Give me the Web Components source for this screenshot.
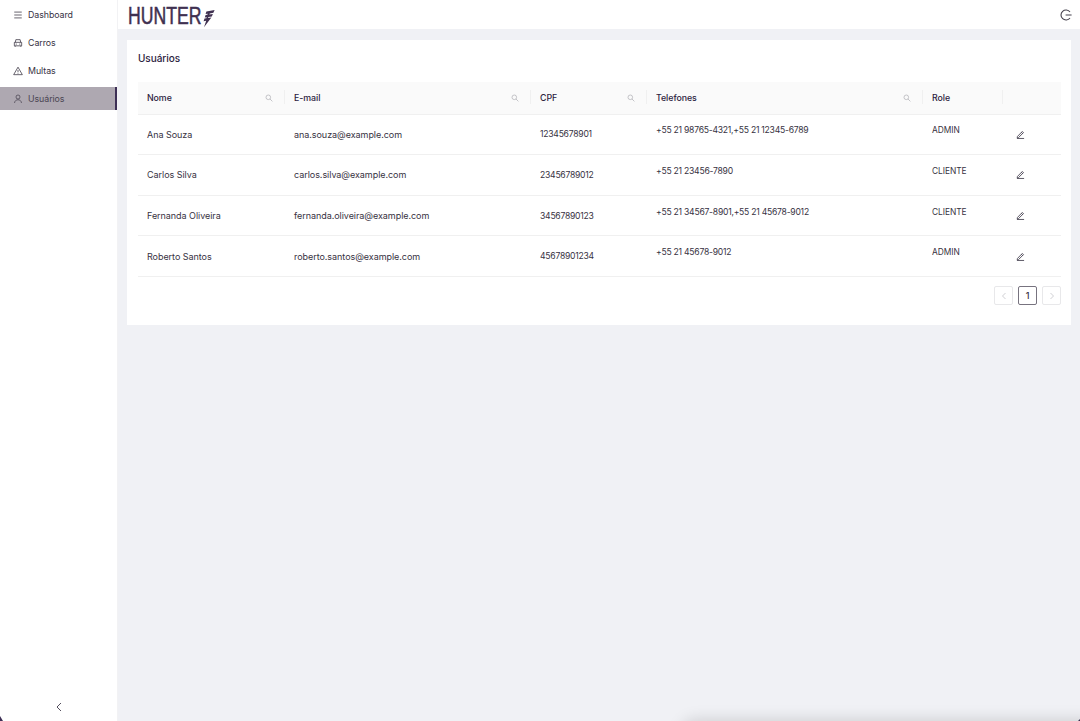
<!DOCTYPE html>
<html lang="pt-BR">
<head>
<meta charset="utf-8">
<title>Usuários</title>
<style>
  html, body { margin: 0; height: 100%; }
  body {
    font-family: "Inter", "Liberation Sans", sans-serif;
    font-size: 9px;
    letter-spacing: -.05px;
    color: #37323f;
    background: #f0f1f5;
    overflow: hidden;
  }
</style>
</head>
<body>
<app-shell>
  <side-nav slot="nav">
    <nav-item icon="menu">Dashboard</nav-item>
    <nav-item icon="car">Carros</nav-item>
    <nav-item icon="warning">Multas</nav-item>
    <nav-item icon="user" active>Usuários</nav-item>
  </side-nav>
  <top-bar slot="top"></top-bar>
  <content-card heading="Usuários">
    <users-table></users-table>
    <table-pager></table-pager>
  </content-card>
</app-shell>

<script>
const ICONS = {
  menu: '<path d="M1.5 2.5h9M1.5 6h9M1.5 9.5h9"/>',
  car: '<path d="M2.8 5.2 3.4 2h5.2l.6 3.2M1.6 5.2h8.8v4.2H1.6zM2.6 9.4v1.2M9.4 9.4v1.2M3.2 7.3h1.4M7.4 7.3h1.4"/>',
  warning: '<path d="M6 1.4 11.2 10.4H.8zM6 4.8v2.8M6 8.4v.7"/>',
  user: '<circle cx="6" cy="3.6" r="2.4"/><path d="M1.8 10.8c.3-2.6 2.1-3.9 4.2-3.9s3.9 1.3 4.2 3.9"/>'
};

class AppShell extends HTMLElement {
  constructor() {
    super();
    this.attachShadow({ mode: 'open' });
    this.shadowRoot.innerHTML = `
      <style>
        :host { display: flex; height: 721px; width: 1080px; position: relative; overflow: hidden; }
        .main { flex: 1; min-width: 0; display: flex; flex-direction: column; gap: 11px; }
        .page { padding: 0 9px; }
        /* shadow of something lying just below the window */
        .under {
          position: absolute; left: 685px; right: -40px; top: 723px; height: 30px;
          border-radius: 10px; box-shadow: 0 0 16px 3px rgba(0, 0, 0, .15);
        }
        .corner { position: absolute; bottom: 0; background: #3d2f55; }
        .corner.left { left: 0; width: 3px; height: 5px; clip-path: polygon(0 0, 100% 100%, 0 100%); }
        .corner.right { right: 0; width: 2px; height: 2px; clip-path: polygon(100% 0, 100% 100%, 0 100%); }
      </style>
      <slot name="nav"></slot>
      <div class="main">
        <slot name="top"></slot>
        <div class="page"><slot></slot></div>
      </div>
      <div class="under"></div>
      <div class="corner left"></div>
      <div class="corner right"></div>
    `;
  }
}

class SideNav extends HTMLElement {
  constructor() {
    super();
    this.attachShadow({ mode: 'open' });
    this.shadowRoot.innerHTML = `
      <style>
        :host {
          display: flex; flex-direction: column; flex: none; box-sizing: border-box;
          width: 118px; height: 721px; background: #fff; border-right: 1px solid #f2f2f4;
        }
        .items { flex: 1; display: flex; flex-direction: column; gap: 5px; padding-top: 3px; }
        .collapse { height: 28px; display: flex; align-items: center; justify-content: center; color: #55505f; }
        svg { width: 8px; height: 10px; fill: none; stroke: currentColor; stroke-width: 1; }
      </style>
      <div class="items"><slot></slot></div>
      <div class="collapse"><svg viewBox="0 0 8 10"><path d="M6 1 2 5l4 4"/></svg></div>
    `;
  }
}

class NavItem extends HTMLElement {
  constructor() {
    super();
    this.attachShadow({ mode: 'open' });
    this.shadowRoot.innerHTML = `
      <style>
        :host {
          display: flex; align-items: center; gap: 5px; box-sizing: border-box;
          height: 23px; padding-left: 13px; color: #37323f; font-size: 8.8px;
        }
        :host([active]) { background: #aea8b1; border-right: 2px solid #3d2f55; color: #4a4552; }
        svg { width: 10px; height: 10px; fill: none; stroke: currentColor; stroke-width: .9; flex: none; }
      </style>
      <svg viewBox="0 0 12 12">${ICONS[this.getAttribute('icon')] || ''}</svg>
      <slot></slot>
    `;
  }
}

class TopBar extends HTMLElement {
  constructor() {
    super();
    this.attachShadow({ mode: 'open' });
    this.shadowRoot.innerHTML = `
      <style>
        :host {
          display: flex; align-items: center; justify-content: space-between; flex: none;
          height: 29px; background: #fff; padding: 0 8px 0 10px;
        }
        .logo { display: flex; align-items: flex-start; height: 29px; color: #3f3050; }
        .word {
          display: block; width: 74px; font: 400 24.5px/31px "Liberation Sans", sans-serif; letter-spacing: 0;
          -webkit-text-stroke: .55px currentColor;
          transform: scaleX(.72); transform-origin: 0 50%; white-space: nowrap;
        }
        .bolt { width: 14px; height: 20px; margin: 8px 0 0 -1px; fill: currentColor; flex: none; overflow: visible; }
        .out { width: 12px; height: 12px; fill: none; stroke: #45414d; stroke-width: 1.1; }
      </style>
      <div class="logo">
        <span class="word">HUNTER</span>
        <svg class="bolt" viewBox="0 0 14 20"><path d="M5.4 3.4 13.6 2 12.4 4.8 8.8 5.4 8.3 6.5 11.9 6 10.8 8.6 7.4 9.1 7 10 10.4 9.5 3 19.2 5.2 12.8 2.6 13.2 3.5 10.6 5.4 10.3 5.8 9.3 3.8 9.6 4.6 7 6.4 6.7 6.8 5.7 4.6 6z"/></svg>
      </div>
      <svg class="out" viewBox="0 0 12 12"><path d="M10 3A5 5 0 1 0 10 9M5.6 6h6"/></svg>
    `;
  }
}

class ContentCard extends HTMLElement {
  constructor() {
    super();
    this.attachShadow({ mode: 'open' });
    this.shadowRoot.innerHTML = `
      <style>
        :host { display: block; background: #fff; padding: 11px 10px 20px 11px; height: 285px; box-sizing: border-box; }
        h2 { margin: 0 0 17px; font-size: 10px; line-height: 14px; font-weight: 500; color: #2c2240; }
      </style>
      <h2>${this.getAttribute('heading')}</h2>
      <slot></slot>
    `;
  }
}

const USERS = [
  ['Ana Souza', 'ana.souza@example.com', '12345678901', '+55 21 98765-4321,+55 21 12345-6789', 'ADMIN'],
  ['Carlos Silva', 'carlos.silva@example.com', '23456789012', '+55 21 23456-7890', 'CLIENTE'],
  ['Fernanda Oliveira', 'fernanda.oliveira@example.com', '34567890123', '+55 21 34567-8901,+55 21 45678-9012', 'CLIENTE'],
  ['Roberto Santos', 'roberto.santos@example.com', '45678901234', '+55 21 45678-9012', 'ADMIN']
];

class UsersTable extends HTMLElement {
  constructor() {
    super();
    this.attachShadow({ mode: 'open' });
    const search = '<svg class="search" viewBox="0 0 8 8"><circle cx="3.3" cy="3.3" r="2.3"/><path d="m5 5 2.4 2.4"/></svg>';
    const edit = '<svg class="edit" viewBox="0 0 10 10"><path d="M1.6 7.2 7 1.6l1.3 1.3-5.5 5.5-1.5.2zM6 2.6l1.4 1.4M1 9.4h8"/></svg>';
    const rows = USERS.map(u => `
      <tr>
        <td>${u[0]}</td>
        <td>${u[1]}</td>
        <td class="num">${u[2]}</td>
        <td class="up num">${u[3]}</td>
        <td class="up role">${u[4]}</td>
        <td class="act">${edit}</td>
      </tr>`).join('');
    this.shadowRoot.innerHTML = `
      <style>
        :host { display: block; }
        table { width: 923px; border-collapse: collapse; table-layout: fixed; }
        th {
          position: relative; height: 32px; padding: 0 10px; box-sizing: border-box; text-align: left;
          font-weight: 500; font-size: 8.8px; background: #fafafa; border-bottom: 1px solid #f0f0f0; color: #2c2240;
        }
        th:first-child, td:first-child { padding-left: 9px; }
        th + th::before {
          content: ""; position: absolute; left: 0; top: 8px; height: 14px; width: 1px; background: #f0f0f0;
        }
        .cell { display: flex; align-items: center; justify-content: space-between; }
        .search { width: 8px; height: 8px; fill: none; stroke: #c4c4c8; stroke-width: 1; margin-right: 1px; }
        td { height: 40.67px; padding: 0 10px; box-sizing: border-box; border-bottom: 1px solid #f0f0f0; }
        td.num { font-size: 8.6px; letter-spacing: -.24px; }
        td.up { padding-bottom: 8px; }
        td.role { font-size: 8.4px; }
        td.act { padding-left: 14px; }
        .edit { display: block; width: 9px; height: 9px; fill: none; stroke: #3a3545; stroke-width: .9; }
      </style>
      <table>
        <colgroup>
          <col style="width:146px"><col style="width:246px"><col style="width:116px">
          <col style="width:276px"><col style="width:80px"><col style="width:59px">
        </colgroup>
        <thead>
          <tr>
            <th><div class="cell">Nome${search}</div></th>
            <th><div class="cell">E-mail${search}</div></th>
            <th><div class="cell">CPF${search}</div></th>
            <th><div class="cell">Telefones${search}</div></th>
            <th>Role</th>
            <th></th>
          </tr>
        </thead>
        <tbody>${rows}</tbody>
      </table>
    `;
  }
}

class TablePager extends HTMLElement {
  constructor() {
    super();
    this.attachShadow({ mode: 'open' });
    this.shadowRoot.innerHTML = `
      <style>
        :host { display: flex; justify-content: flex-end; gap: 5px; margin-top: 9px; }
        .btn {
          width: 19px; height: 19px; box-sizing: border-box; border: 1px solid #e8e8ea; border-radius: 2px;
          display: flex; align-items: center; justify-content: center; color: #d0d0d4;
        }
        .now { border-color: #77737f; color: #3a3545; font-weight: 500; }
        svg { width: 6px; height: 8px; fill: none; stroke: currentColor; stroke-width: 1; }
      </style>
      <div class="btn"><svg viewBox="0 0 6 8"><path d="M4.5 1 1.5 4l3 3"/></svg></div>
      <div class="btn now">1</div>
      <div class="btn"><svg viewBox="0 0 6 8"><path d="M1.5 1 4.5 4l-3 3"/></svg></div>
    `;
  }
}

customElements.define('app-shell', AppShell);
customElements.define('side-nav', SideNav);
customElements.define('nav-item', NavItem);
customElements.define('top-bar', TopBar);
customElements.define('content-card', ContentCard);
customElements.define('users-table', UsersTable);
customElements.define('table-pager', TablePager);
</script>
</body>
</html>
